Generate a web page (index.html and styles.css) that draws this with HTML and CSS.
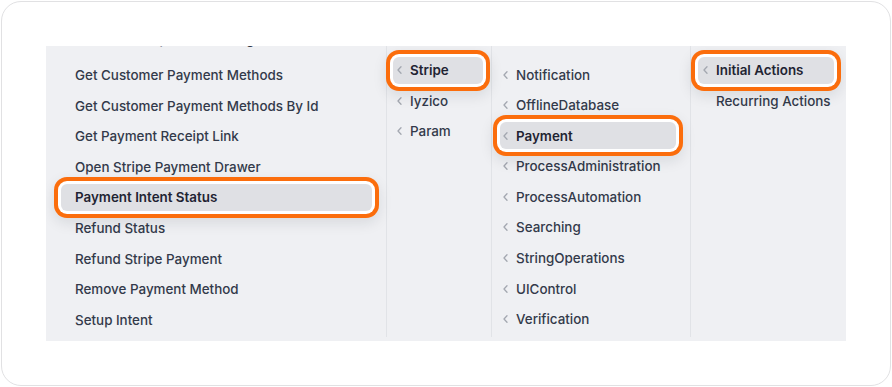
FILE: index.html
```html
<!DOCTYPE html>
<html lang="en">
<head>
<meta charset="utf-8">
<title>Menu</title>
<link rel="stylesheet" href="styles.css">
</head>
<body>
<div class="card">
  <div class="panel">
    <div class="col col1">
      <ul class="list">
        <li class="item peek">Confirm Setup Intent Config</li>
        <li class="item">Get Customer Payment Methods</li>
        <li class="item">Get Customer Payment Methods By Id</li>
        <li class="item">Get Payment Receipt Link</li>
        <li class="item">Open Stripe Payment Drawer</li>
        <li class="item sel">Payment Intent Status</li>
        <li class="item">Refund Status</li>
        <li class="item">Refund Stripe Payment</li>
        <li class="item">Remove Payment Method</li>
        <li class="item">Setup Intent</li>
      </ul>
    </div>
    <div class="col col2">
      <ul class="list">
        <li class="item sel"><span class="chev"><svg width="5" height="8" viewBox="0 0 5 8"><polyline points="4,0.8 1,4 4,7.2"/></svg></span>Stripe</li>
        <li class="item"><span class="chev"><svg width="5" height="8" viewBox="0 0 5 8"><polyline points="4,0.8 1,4 4,7.2"/></svg></span>Iyzico</li>
        <li class="item"><span class="chev"><svg width="5" height="8" viewBox="0 0 5 8"><polyline points="4,0.8 1,4 4,7.2"/></svg></span>Param</li>
      </ul>
    </div>
    <div class="col col3">
      <ul class="list">
        <li class="item"><span class="chev"><svg width="5" height="8" viewBox="0 0 5 8"><polyline points="4,0.8 1,4 4,7.2"/></svg></span>Notification</li>
        <li class="item"><span class="chev"><svg width="5" height="8" viewBox="0 0 5 8"><polyline points="4,0.8 1,4 4,7.2"/></svg></span>OfflineDatabase</li>
        <li class="item sel"><span class="chev"><svg width="5" height="8" viewBox="0 0 5 8"><polyline points="4,0.8 1,4 4,7.2"/></svg></span>Payment</li>
        <li class="item"><span class="chev"><svg width="5" height="8" viewBox="0 0 5 8"><polyline points="4,0.8 1,4 4,7.2"/></svg></span>ProcessAdministration</li>
        <li class="item"><span class="chev"><svg width="5" height="8" viewBox="0 0 5 8"><polyline points="4,0.8 1,4 4,7.2"/></svg></span>ProcessAutomation</li>
        <li class="item"><span class="chev"><svg width="5" height="8" viewBox="0 0 5 8"><polyline points="4,0.8 1,4 4,7.2"/></svg></span>Searching</li>
        <li class="item"><span class="chev"><svg width="5" height="8" viewBox="0 0 5 8"><polyline points="4,0.8 1,4 4,7.2"/></svg></span>StringOperations</li>
        <li class="item"><span class="chev"><svg width="5" height="8" viewBox="0 0 5 8"><polyline points="4,0.8 1,4 4,7.2"/></svg></span>UIControl</li>
        <li class="item"><span class="chev"><svg width="5" height="8" viewBox="0 0 5 8"><polyline points="4,0.8 1,4 4,7.2"/></svg></span>Verification</li>
      </ul>
    </div>
    <div class="col col4">
      <ul class="list">
        <li class="item sel"><span class="chev"><svg width="5" height="8" viewBox="0 0 5 8"><polyline points="4,0.8 1,4 4,7.2"/></svg></span>Initial Actions</li>
        <li class="item"><span class="chev"></span>Recurring Actions</li>
      </ul>
    </div>
  </div>
</div>
</body>
</html>
```

FILE: styles.css
```css
* { box-sizing: border-box; }
html, body { margin: 0; padding: 0; background: #ffffff; }
body {
  font-family: Inter, "Noto Sans", "Liberation Sans", sans-serif;
  font-size: 13.4px;
  color: #333a4a;
}
.card {
  margin: 1px 0 0 1px;
  width: 890px;
  height: 385px;
  border: 1px solid #e1e1e3;
  border-radius: 20px;
  padding: 44px 44px 44px 44px;
  background: #fff;
}
.panel {
  display: grid;
  grid-template-columns: 340px 105px 199px 156px;
  height: 295px;
  background: #eff0f3;
  overflow: hidden;
}
.col {
  height: 291px;
}
.col2, .col3, .col4 { border-left: 1px solid #e1e3e7; }
.list {
  list-style: none;
  margin: 0;
  padding: 0;
}
.item {
  position: relative;
  display: flex;
  align-items: center;
  height: 27px;
  margin-bottom: 3.6px;
  border-radius: 6px;
  white-space: nowrap;
  font-weight: 500;
}
.item.peek { margin-bottom: 9px; }
.chev {
  display: inline-flex;
  width: 5px;
  height: 8px;
  margin: 0 8px 0 4px;
}
.chev svg polyline {
  fill: none;
  stroke: #a3a7b0;
  stroke-width: 1.3;
  stroke-linecap: round;
  stroke-linejoin: round;
}
.sel {
  z-index: 2;
  background: #dfe0e4;
  color: #1f2433;
  font-weight: 600;
  box-shadow: 0 0 0 3px #ffffff, 0 0 0 7px #fb6d0c, 0 5px 14px 7px rgba(20, 25, 40, 0.10);
}
.col1 .list { margin: -20.5px 14px 0 15px; }
.col1 .item { padding-left: 14px; }
.col2 .list { margin: 10.5px 8px 0 6px; }
.col3 .list { margin: 15px 14px 0 8px; }
.col3 .chev { margin-left: 3px; }
.col4 .list { margin: 10.5px 12px 0 7px; }
.col4 .chev { margin-left: 5px; }
```
